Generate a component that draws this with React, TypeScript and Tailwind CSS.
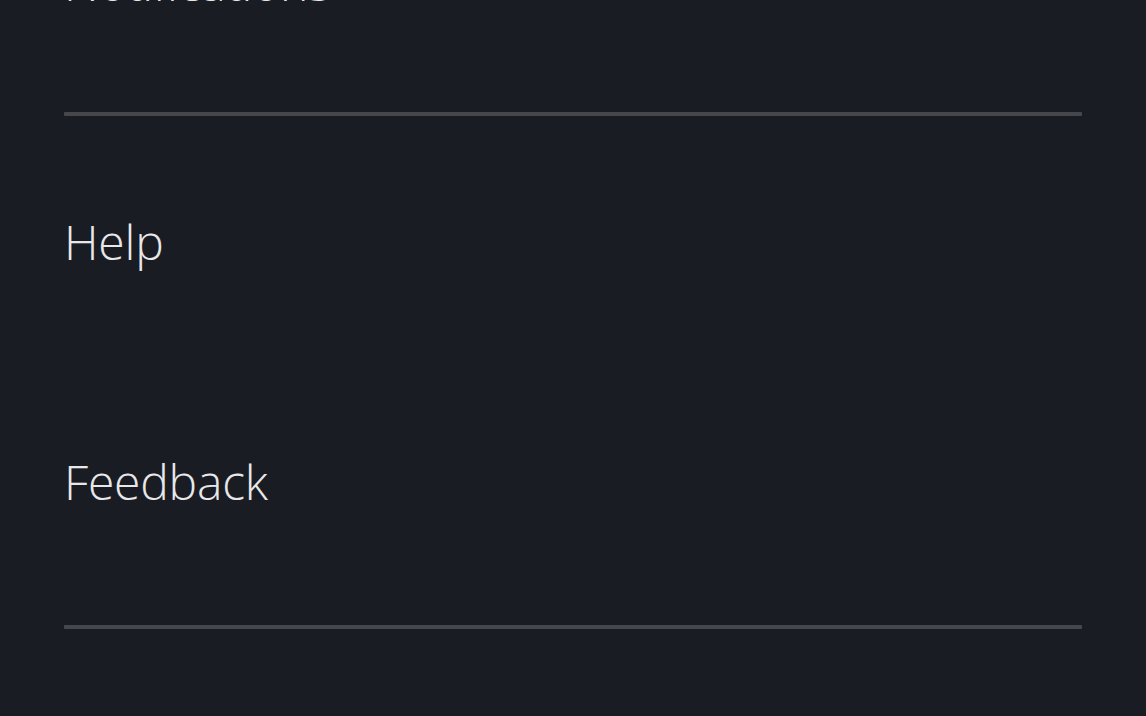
const items = [
    { group: ['Notifications'] },
    { group: ['Help', 'Feedback'] },
];

function Row({ label }: { label: string }) {
    return (
        <div className="h-[240px] flex items-center">
            <span className="text-[48px] leading-none font-light text-[#e8e8ea] tracking-[-0.2px]">{label}</span>
        </div>
    );
}

export default function App() {
    return (
        <div
            className="w-full h-[716px] overflow-hidden bg-[#1a1c23]"
            style={{ fontFamily: '"Open Sans", "Noto Sans", sans-serif' }}
        >
            <div className="mx-[64px] -mt-[137px]">
                {items.map((item, i) => (
                    <div key={i}>
                        <div className={i === 0 ? 'pb-[9px]' : 'pt-[6px] pb-[23px]'}>
                            {item.group.map((label) => (
                                <Row key={label} label={label} />
                            ))}
                        </div>
                        <div className="h-[4px] bg-[#45474c] rounded-[1px]"></div>
                    </div>
                ))}
            </div>
        </div>
    );
}
